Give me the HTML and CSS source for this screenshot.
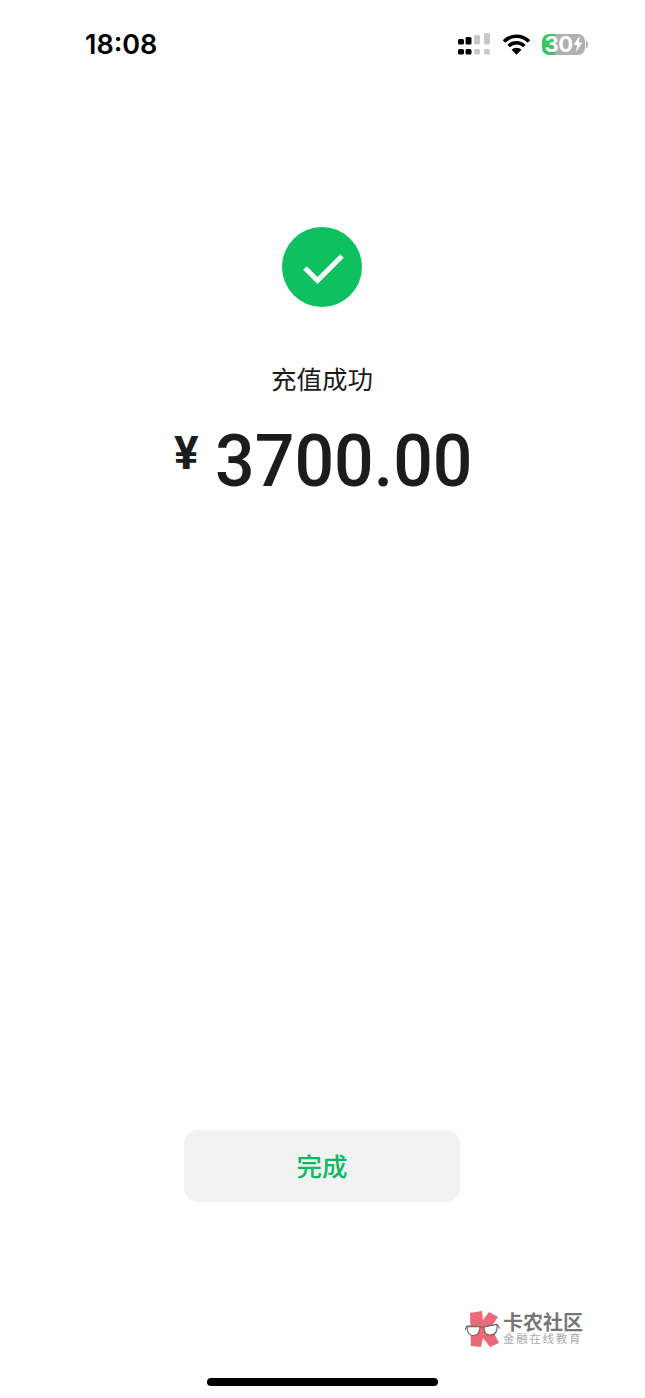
FILE: index.html
```html
<!DOCTYPE html>
<html lang="zh-CN">
<head>
  <meta charset="UTF-8" />
  <meta name="viewport" content="width=device-width, initial-scale=1.0"/>
  <title>充值成功</title>
  <link rel="stylesheet" href="styles.css">
</head>
<body>
  <div class="page">
    <header class="status-bar">
      <span class="time">18:08</span>
      <div class="status-icons">
        <svg class="signal" width="33" height="22" viewBox="0 0 33 22">
          <rect x="0" y="6" width="6" height="5.5" rx="1.5" fill="#000"/>
          <rect x="7.5" y="4" width="6" height="7.5" rx="1.5" fill="#000"/>
          <rect x="16" y="2" width="6" height="9.5" rx="1.5" fill="#c8c8c8"/>
          <rect x="26" y="0" width="6" height="11.5" rx="1.5" fill="#c8c8c8"/>
          <rect x="0" y="16" width="6" height="5.5" rx="1.5" fill="#000"/>
          <rect x="7.5" y="16" width="6" height="5.5" rx="1.5" fill="#000"/>
          <rect x="16" y="16" width="6" height="5.5" rx="1.5" fill="#c8c8c8"/>
          <rect x="26" y="16" width="6" height="5.5" rx="1.5" fill="#c8c8c8"/>
        </svg>
        <svg class="wifi" width="29" height="21" viewBox="0 0 29 21">
          <path d="M2 7.500a17.600 17.600 0 0 1 25 0M6.600 12a11.200 11.200 0 0 1 15.800 0" fill="none" stroke="#000" stroke-width="3.6"/>
          <path d="M14.500 20.800l-5-5a7 7 0 0 1 10 0z" fill="#000"/>
        </svg>
        <div class="battery">
          <div class="battery-body">
            <span>30</span>
            <svg width="10" height="16" viewBox="0 0 10 16"><path d="M6.500 0L0.500 9h3.500L3 16l6.500-9.500H6z" fill="#fff"/></svg>
          </div>
          <i class="battery-nub"></i>
        </div>
      </div>
    </header>

    <main class="result">
      <svg class="check" width="80" height="80" viewBox="0 0 80 80">
        <circle cx="40" cy="40" r="40" fill="#0dc160"/>
        <path d="M23 41l12.500 12.500L60 29" fill="none" stroke="#fff" stroke-width="5"/>
      </svg>
      <p class="result-title">充值成功</p>
      <p class="amount"><span class="currency">¥</span><span class="digits">3700.00</span></p>
    </main>

    <footer class="actions">
      <button class="done-btn" type="button">完成</button>
    </footer>
    <div class="home-bar"></div>

    <div class="watermark">
      <svg width="36" height="38" viewBox="0 0 36 38">
        <path d="M5 3L17 1l1 9 6-8 9 5-7 10 5 10 3 6-9 4-7-9-2 9-10-1z" fill="#ec6a78"/>
        <path d="M0 20l2-4 13 .5 3 1 3-1 11-2 3 4" fill="none" stroke="#666" stroke-width="1.1"/>
        <path d="M2 16.500l13 .3q0 8.700-7 8.700q-6 0-6-9z" fill="#fff" stroke="#666" stroke-width="1.1"/>
        <path d="M19 17l13-2.500q1 10.500-7 10.500q-6 0-6-8z" fill="#fff" stroke="#666" stroke-width="1.1"/>
      </svg>
      <div class="watermark-text">
        <strong>卡农社区</strong>
        <span>金融在线教育</span>
      </div>
    </div>
  </div>
</body>
</html>
```
FILE: styles.css
```css
* {
  box-sizing: border-box;
}
html, body {
  margin: 0;
  padding: 0;
}
body {
  background: #fff;
  font-family: "Noto Sans CJK SC", "Roboto", sans-serif;
}
.page {
  position: relative;
  width: 645px;
  height: 1398px;
  display: flex;
  flex-direction: column;
  overflow: hidden;
}
.status-bar {
  height: 88px;
  padding: 0 57px 0 85px;
  display: flex;
  align-items: center;
  justify-content: space-between;
}
.time {
  font-family: "Inter", sans-serif;
  font-size: 27px;
  font-weight: 600;
  color: #000;
}
.status-icons {
  display: flex;
  align-items: center;
  gap: 11px;
}
.battery {
  display: flex;
  align-items: center;
  gap: 1px;
}
.battery-body {
  width: 43px;
  height: 21px;
  border-radius: 7px;
  background: linear-gradient(to right, #3cc35f 0, #3cc35f 13px, #b0b0b0 13px);
  display: flex;
  align-items: center;
  justify-content: center;
  color: #fff;
  font-family: "Inter", sans-serif;
  font-size: 22px;
  font-weight: 700;
  letter-spacing: -0.5px;
}
.battery-nub {
  width: 2px;
  height: 7px;
  border-radius: 0 2px 2px 0;
  background: #b0b0b0;
}
.result {
  padding: 139px 1px 0 0;
  display: flex;
  flex-direction: column;
  align-items: center;
  flex: 1;
}
.check {
  display: block;
}
.result-title {
  margin: 51px 0 0;
  font-size: 25.5px;
  line-height: 40px;
  color: #1a1a1a;
}
.amount {
  margin: 10px 0 0;
  font-family: "Roboto", sans-serif;
  font-size: 72px;
  font-weight: 500;
  line-height: 90px;
  color: #1c1c1c;
  white-space: nowrap;
}
.currency {
  font-size: 46px;
  font-weight: 700;
  vertical-align: 17px;
  margin-right: 16px;
}
.digits {
  display: inline-block;
  transform: scaleX(0.97);
  transform-origin: left center;
  margin-right: -10px;
}
.actions {
  display: flex;
  justify-content: center;
  padding: 0 1px 196px 0;
}
.done-btn {
  width: 276px;
  height: 72px;
  padding: 0 0 4px;
  border: 0;
  border-radius: 14px;
  background: #f2f2f2;
  color: #0cb863;
  font-family: inherit;
  font-size: 25.5px;
  font-weight: 500;
}
.home-bar {
  position: absolute;
  left: 207px;
  bottom: 12px;
  width: 231px;
  height: 8px;
  border-radius: 4px;
  background: #000;
}
.watermark {
  position: absolute;
  left: 465px;
  top: 1310px;
  display: flex;
  align-items: flex-start;
  gap: 2px;
}
.watermark-text {
  display: flex;
  flex-direction: column;
  padding-top: 1px;
  color: #777;
}
.watermark-text strong {
  font-size: 20px;
  line-height: 22px;
  font-weight: 700;
}
.watermark-text span {
  font-size: 11.5px;
  line-height: 10px;
  letter-spacing: 1.7px;
  color: #aaa;
}
```
